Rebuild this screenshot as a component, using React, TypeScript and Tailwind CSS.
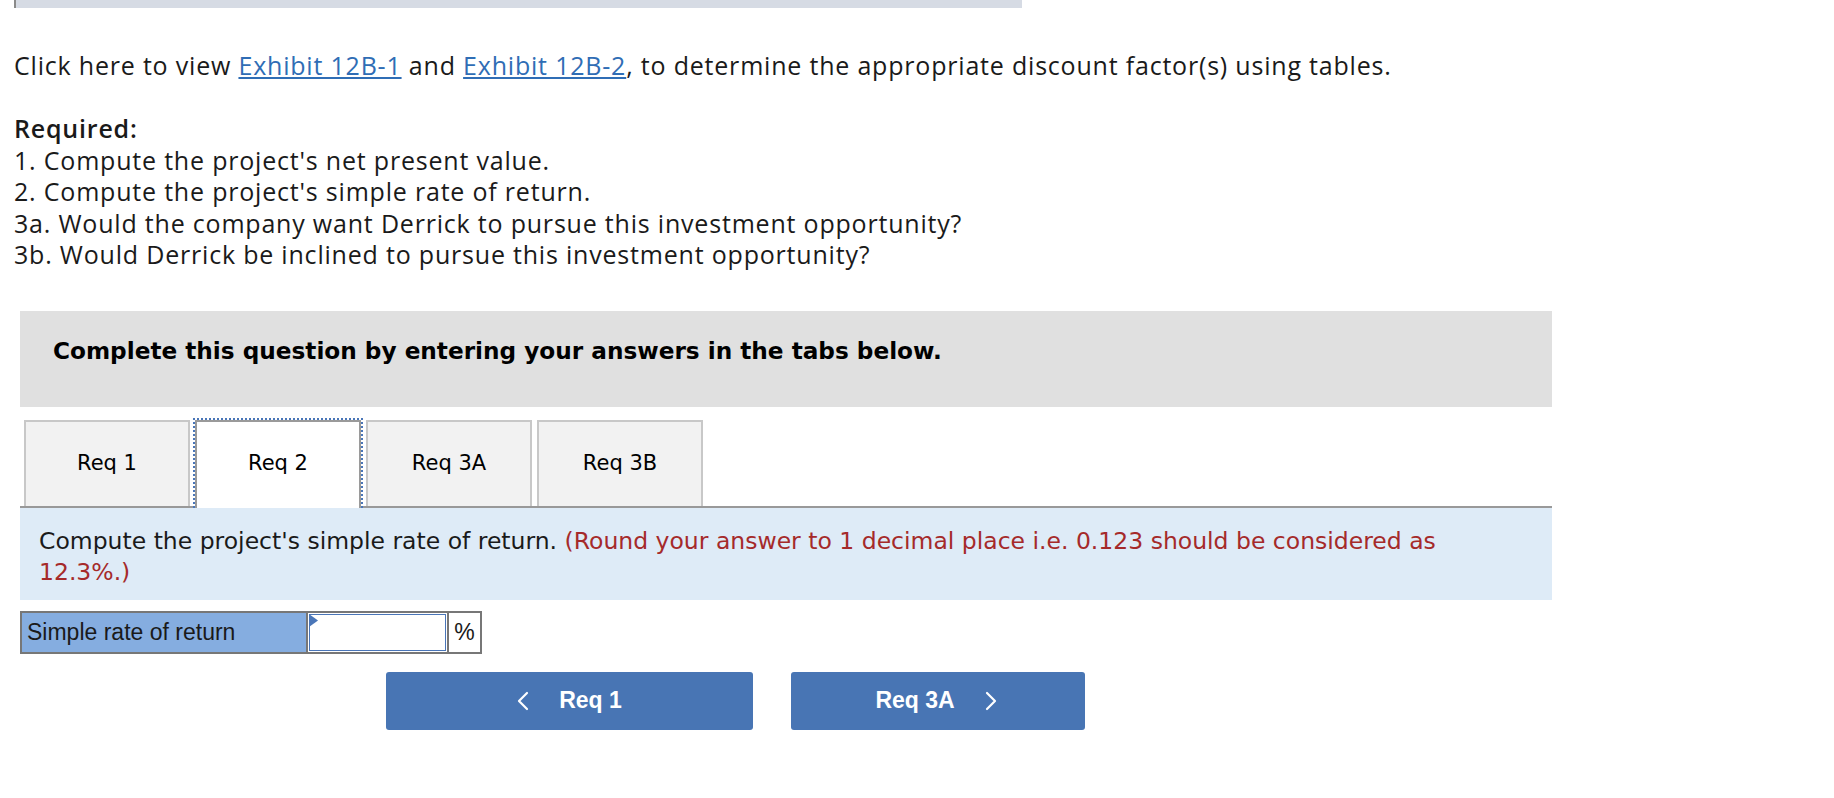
import { useState } from "react";

const tabs = ["Req 1", "Req 2", "Req 3A", "Req 3B"];

function ChevronLeft() {
  return (
    <svg width="12" height="20" viewBox="0 0 12 20" fill="none" stroke="currentColor" strokeWidth="2.2" strokeLinecap="round" strokeLinejoin="round">
      <polyline points="10,2 2,10 10,18" />
    </svg>
  );
}

function ChevronRight() {
  return (
    <svg width="12" height="20" viewBox="0 0 12 20" fill="none" stroke="currentColor" strokeWidth="2.2" strokeLinecap="round" strokeLinejoin="round">
      <polyline points="2,2 10,10 2,18" />
    </svg>
  );
}

export default function App() {
  const [active, setActive] = useState(1);
  const [rate, setRate] = useState("");

  return (
    <div className="min-h-screen bg-white text-[#1a1a1a]">
      <div className="pl-[14px] font-['Open_Sans',sans-serif] text-[25px] tracking-[0.8px]">
        <div className="h-[8px] w-[1008px] border-l-2 border-[#8a8a8a] bg-[#d6dbe4]" />
        <p className="mt-[41px] leading-[32px]">
          Click here to view{" "}
          <a href="#" className="text-[#2f6db5] underline underline-offset-2">Exhibit 12B-1</a> and{" "}
          <a href="#" className="text-[#2f6db5] underline underline-offset-2">Exhibit 12B-2</a>, to determine the
          appropriate discount factor(s) using tables.
        </p>
        <div className="mt-[32px] leading-[31.5px]">
          <div className="font-semibold">Required:</div>
          <div>1. Compute the project's net present value.</div>
          <div>2. Compute the project's simple rate of return.</div>
          <div>3a. Would the company want Derrick to pursue this investment opportunity?</div>
          <div>3b. Would Derrick be inclined to pursue this investment opportunity?</div>
        </div>
      </div>

      <div className="ml-[20px] mt-[40px] w-[1532px] font-['DejaVu_Sans',Verdana,sans-serif]">
        <div className="h-[96px] bg-[#e0e0e0] pl-[33px] pt-[28px] text-[23.2px] font-bold leading-[24px] text-black">
          Complete this question by entering your answers in the tabs below.
        </div>

        <div className="mt-[11px] flex items-end gap-[5px] border-b-2 border-[#999] pl-[4px]">
          {tabs.map((t, i) =>
            i === active ? (
              <div
                key={t}
                className="relative z-10 -mx-[2px] -mb-[2px] border-2 border-b-0 border-dotted border-[#4a76b8]"
              >
                <button
                  onClick={() => setActive(i)}
                  className="flex h-[88px] w-[166px] items-center justify-center border-2 border-b-0 border-[#9a9a9a] bg-white pb-[2px] text-[21px] text-black"
                >
                  {t}
                </button>
              </div>
            ) : (
              <button
                key={t}
                onClick={() => setActive(i)}
                className="flex h-[86px] w-[166px] items-center justify-center border-2 border-b-0 border-[#c8c8c8] bg-[#f2f2f2] text-[21px] text-black"
              >
                {t}
              </button>
            )
          )}
        </div>

        <div className="bg-[#deebf7] pb-[12px] pl-[19px] pr-[90px] pt-[18px] text-[23.5px] leading-[31px]">
          Compute the project's simple rate of return.{" "}
          <span className="text-[#a52a2a]">
            (Round your answer to 1 decimal place i.e. 0.123 should be considered as 12.3%.)
          </span>
        </div>

        <div className="mt-[11px] flex h-[43px] w-[462px] border-2 border-[#777] font-['Liberation_Sans',Arial,sans-serif] text-[23px]">
          <div className="flex w-[284px] items-center bg-[#85ade0] pl-[5px] text-[#1a1a1a]">Simple rate of return</div>
          <div className="relative w-[141px] border-l-2 border-[#777] bg-white p-[1px]">
            <input
              value={rate}
              onChange={(e) => setRate(e.target.value)}
              className="h-full w-full border border-[#4a76b8] bg-white px-2 text-right outline-none"
            />
            <svg className="absolute left-[1px] top-[1px]" width="9" height="13" viewBox="0 0 9 13">
              <polygon points="0,0 9,6.5 0,13" fill="#4a76b8" />
            </svg>
          </div>
          <div className="flex flex-1 items-center justify-center border-l-2 border-[#777] bg-white">%</div>
        </div>

        <div className="ml-[366px] mt-[18px] flex gap-[38px] font-['Liberation_Sans',Arial,sans-serif] text-[23px] font-bold text-white">
          <button className="flex h-[58px] w-[367px] items-center justify-center gap-[30px] rounded-[3px] bg-[#4875b4]">
            <ChevronLeft />
            <span>Req 1</span>
          </button>
          <button className="flex h-[58px] w-[294px] items-center justify-center gap-[30px] rounded-[3px] bg-[#4875b4] pr-[4px]">
            <span>Req 3A</span>
            <ChevronRight />
          </button>
        </div>
      </div>
    </div>
  );
}
